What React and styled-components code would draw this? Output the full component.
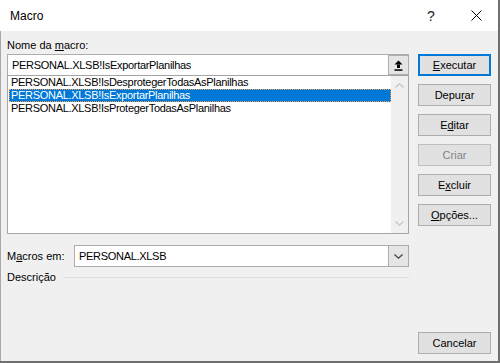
import React from "react";
import styled, { createGlobalStyle, css } from "styled-components";

const FONT = `"Liberation Sans", Arial, sans-serif`;

const Global = createGlobalStyle`
  html, body { margin: 0; padding: 0; background: #f0f0f0; }
  body { font-family: ${FONT}; }
`;

const Dialog = styled.div`
  width: 500px;
  height: 363px;
  box-sizing: border-box;
  border-right: 2px solid #6f6f6f;
  border-bottom: 2px solid #6f6f6f;
  display: flex;
  flex-direction: column;
  font-family: ${FONT};
  font-size: 11px;
  color: #000;
`;

const TitleBar = styled.div`
  height: 31px;
  flex: none;
  background: #fff;
  display: flex;
  align-items: center;
  padding-left: 10px;
`;

const Title = styled.div`
  flex: 1;
  font-size: 12px;
`;

const CaptionButton = styled.div`
  width: ${(p) => p.$w}px;
  height: 31px;
  display: flex;
  align-items: center;
  justify-content: center;
  font-size: 14px;
  color: #222;
`;

const Body = styled.div`
  flex: 1;
  display: grid;
  grid-template-columns: 402px 73px;
  column-gap: 9px;
  padding: 6px 0 7px 6px;
  border-left: 1px solid #a8a8a8;
  background: #f0f0f0;
  min-height: 0;
`;

const LeftCol = styled.div`
  display: flex;
  flex-direction: column;
`;

const RightCol = styled.div`
  display: flex;
  flex-direction: column;
  gap: 8px;
  padding-top: 17px;
`;

const Label = styled.div`
  height: 16px;
  line-height: 16px;
  margin-bottom: 1px;
  white-space: nowrap;
`;

const Mn = styled.span`
  text-decoration: underline;
  text-underline-offset: 1px;
`;

const ComboInput = styled.div`
  height: 22px;
  box-sizing: border-box;
  border: 1px solid #adadad;
  background: #fff;
  display: flex;
`;

const InputText = styled.div`
  flex: 1;
  line-height: 20px;
  padding-left: 4px;
  white-space: nowrap;
  letter-spacing: -0.3px;
`;

const SideButton = styled.div`
  width: 20px;
  box-sizing: border-box;
  border: 1px solid #adadad;
  border-right: none;
  ${(p) => p.$full && css`border-top: none; border-bottom: none;`}
  background: #e5e5e5;
  display: flex;
  align-items: center;
  justify-content: center;
`;

const ListBox = styled.div`
  margin-top: -1px;
  height: 159px;
  box-sizing: border-box;
  border: 1px solid #a5a5a5;
  background: #fff;
  display: flex;
`;

const Items = styled.div`
  flex: 1;
  padding-left: 1px;
`;

const Item = styled.div`
  height: 13px;
  line-height: 13px;
  padding-left: 2px;
  white-space: nowrap;
  letter-spacing: -0.3px;
  box-sizing: border-box;
  ${(p) =>
    p.$selected &&
    css`
      background: #0078d7;
      color: #fff;
      outline: 1px dotted #f0a050;
      outline-offset: -1px;
    `}
`;

const ScrollBar = styled.div`
  width: 17px;
  background: #f0f0f0;
  display: flex;
  flex-direction: column;
  justify-content: space-between;
  align-items: center;
  padding: 7px 0 7px;
`;

const Row = styled.div`
  display: flex;
  align-items: center;
  margin-top: ${(p) => p.$mt}px;
  height: ${(p) => p.$h}px;
`;

const RowLabel = styled.div`
  width: 67px;
  flex: none;
  white-space: nowrap;
`;

const Select = styled.div`
  flex: 1;
  height: 22px;
  box-sizing: border-box;
  border: 1px solid #adadad;
  background: #fff;
  display: flex;
`;

const Separator = styled.div`
  flex: 1;
  height: 1px;
  background: #dcdcdc;
  margin-left: 7px;
`;

const Button = styled.div`
  height: 22px;
  box-sizing: border-box;
  border: 1px solid #adadad;
  background: #e1e1e1;
  display: flex;
  align-items: center;
  justify-content: center;
  white-space: nowrap;
  ${(p) => p.$primary && css`border: 2px solid #0078d7;`}
  ${(p) => p.$disabled && css`color: #838383; border-color: #bfbfbf;`}
  ${(p) => p.$bottom && css`margin-top: auto;`}
`;

const Chevron = ({ up, color }) => (
  <svg width="9" height="5" viewBox="0 0 9 5">
    <polyline
      points={up ? "0.5,4.5 4.5,0.8 8.5,4.5" : "0.5,0.5 4.5,4.2 8.5,0.5"}
      fill="none"
      stroke={color}
      strokeWidth="1.2"
    />
  </svg>
);

const UpArrowIcon = () => (
  <svg width="9" height="11" viewBox="0 0 9 11">
    <polygon points="4.5,0.5 8.5,4.5 0.5,4.5" fill="#000" />
    <rect x="3" y="4.5" width="3" height="3.5" fill="#000" />
    <rect x="0.5" y="9.3" width="8" height="1.5" fill="#000" />
  </svg>
);

const CloseIcon = () => (
  <svg width="11" height="11" viewBox="0 0 11 11">
    <path d="M0.5 0.5 L10.5 10.5 M10.5 0.5 L0.5 10.5" stroke="#000" strokeWidth="1" />
  </svg>
);

const macros = [
  "PERSONAL.XLSB!IsDesprotegerTodasAsPlanilhas",
  "PERSONAL.XLSB!IsExportarPlanilhas",
  "PERSONAL.XLSB!IsProtegerTodasAsPlanilhas",
];

export default function App() {
  return (
    <>
      <Global />
      <Dialog>
        <TitleBar>
          <Title>Macro</Title>
          <CaptionButton $w={46}>?</CaptionButton>
          <CaptionButton $w={44}>
            <CloseIcon />
          </CaptionButton>
        </TitleBar>
        <Body>
          <LeftCol>
            <Label>
              Nome da <Mn>m</Mn>acro:
            </Label>
            <ComboInput>
              <InputText>PERSONAL.XLSB!IsExportarPlanilhas</InputText>
              <SideButton>
                <UpArrowIcon />
              </SideButton>
            </ComboInput>
            <ListBox>
              <Items>
                {macros.map((m, i) => (
                  <Item key={m} $selected={i === 1}>
                    {m}
                  </Item>
                ))}
              </Items>
              <ScrollBar>
                <Chevron up color="#c5c5c5" />
                <Chevron color="#c5c5c5" />
              </ScrollBar>
            </ListBox>
            <Row $mt={11} $h={22}>
              <RowLabel>
                M<Mn>a</Mn>cros em:
              </RowLabel>
              <Select>
                <InputText>PERSONAL.XLSB</InputText>
                <SideButton $full>
                  <Chevron color="#404040" />
                </SideButton>
              </Select>
            </Row>
            <Row $mt={3} $h={14}>
              <span>Descrição</span>
              <Separator />
            </Row>
          </LeftCol>
          <RightCol>
            <Button $primary>
              <Mn>E</Mn>xecutar
            </Button>
            <Button>
              Depu<Mn>r</Mn>ar
            </Button>
            <Button>
              E<Mn>d</Mn>itar
            </Button>
            <Button $disabled>Criar</Button>
            <Button>
              E<Mn>x</Mn>cluir
            </Button>
            <Button>
              <Mn>O</Mn>pções...
            </Button>
            <Button $bottom>Cancelar</Button>
          </RightCol>
        </Body>
      </Dialog>
    </>
  );
}
